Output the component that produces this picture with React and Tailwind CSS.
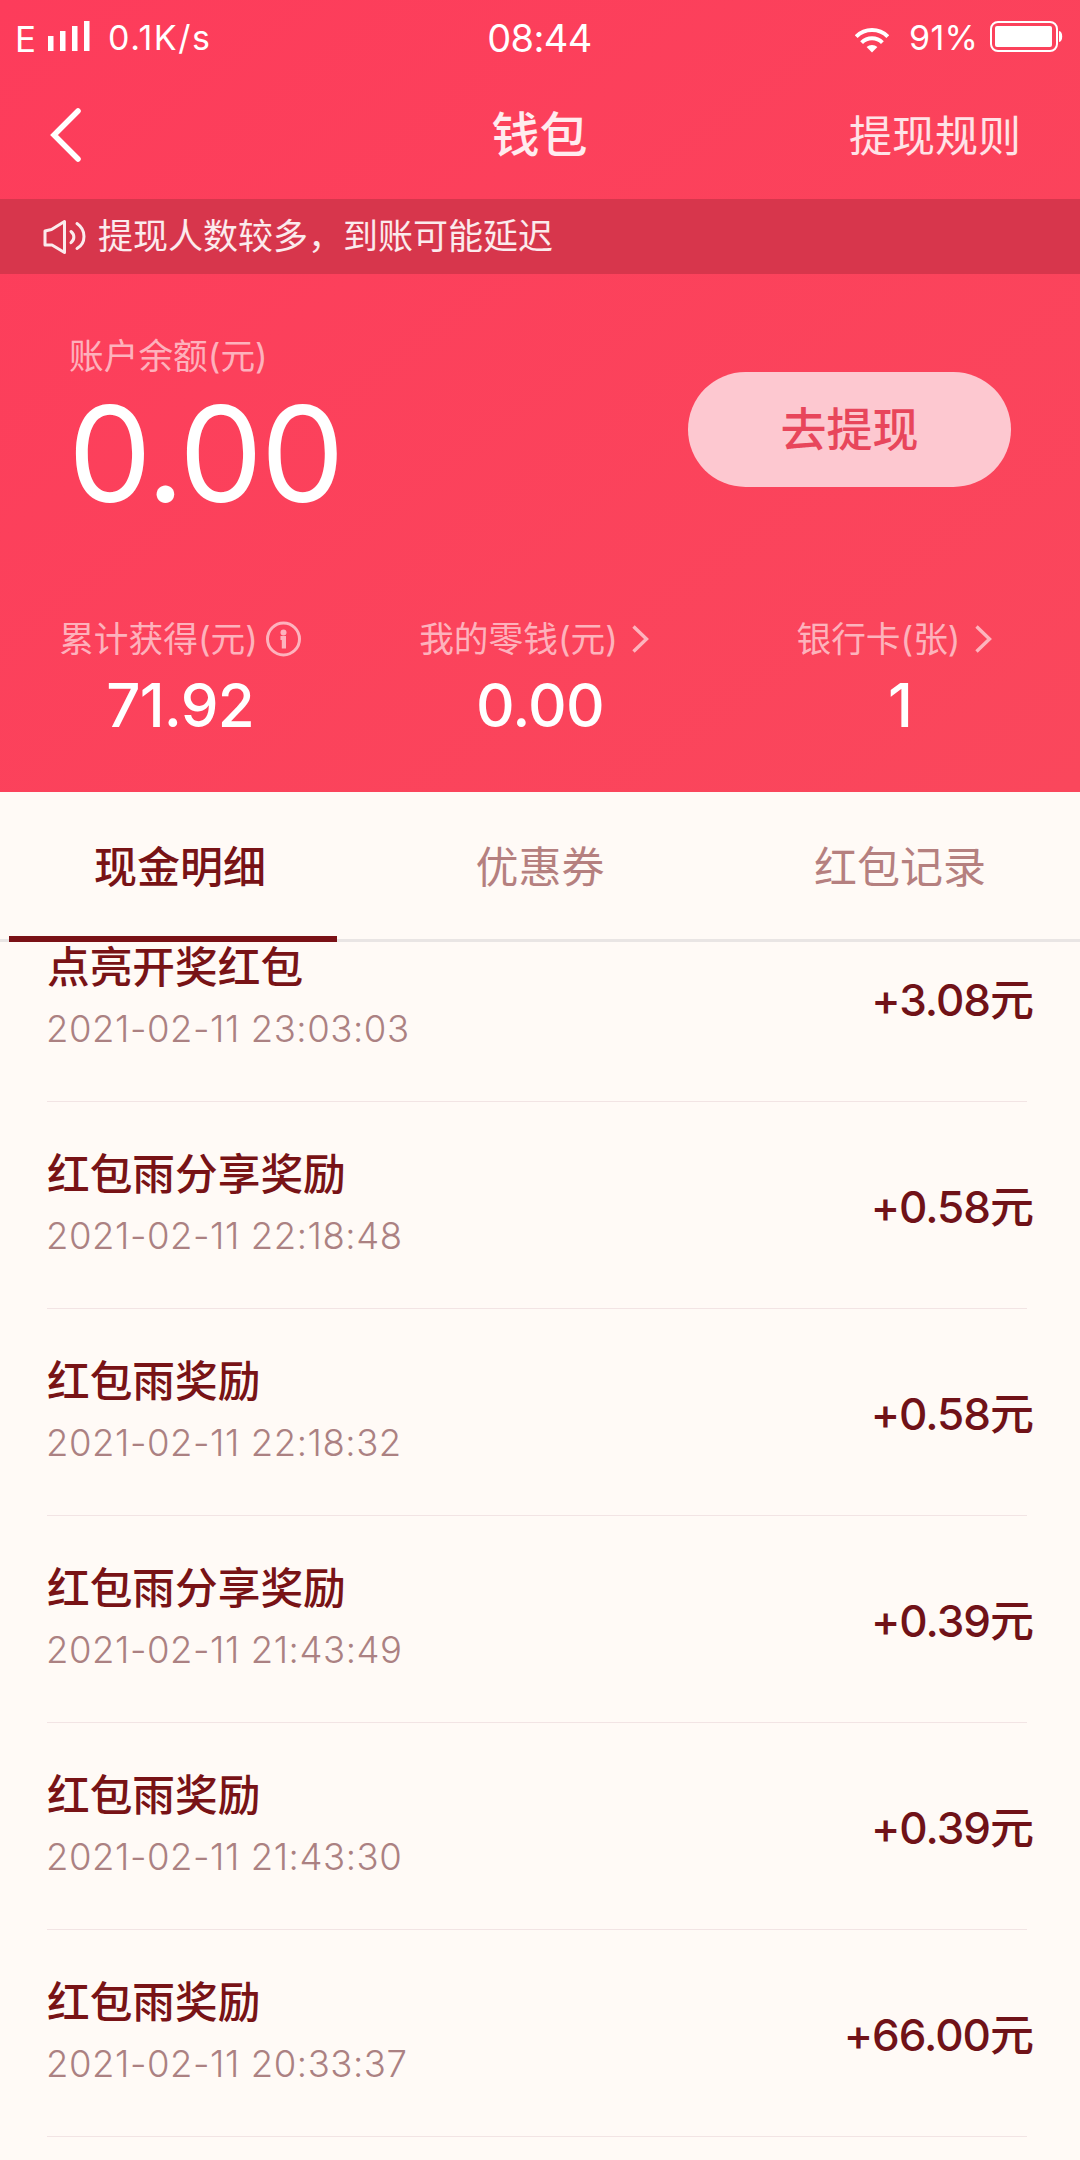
import { useState } from "react";

const TABS = ["现金明细", "优惠券", "红包记录"];

const RECORDS = [
  { title: "点亮开奖红包", time: "2021-02-11 23:03:03", amount: "3.08" },
  { title: "红包雨分享奖励", time: "2021-02-11 22:18:48", amount: "0.58" },
  { title: "红包雨奖励", time: "2021-02-11 22:18:32", amount: "0.58" },
  { title: "红包雨分享奖励", time: "2021-02-11 21:43:49", amount: "0.39" },
  { title: "红包雨奖励", time: "2021-02-11 21:43:30", amount: "0.39" },
  { title: "红包雨奖励", time: "2021-02-11 20:33:37", amount: "66.00" },
];

function SignalIcon() {
  return (
    <svg width="42" height="31" viewBox="0 0 42 31" fill="currentColor">
      <rect x="0" y="15" width="5.500" height="15" />
      <rect x="12" y="10" width="5.500" height="20" />
      <rect x="24" y="5" width="5.500" height="25" />
      <rect x="36" y="0" width="5.500" height="30" />
    </svg>
  );
}

function WifiIcon() {
  return (
    <svg width="34" height="25" viewBox="0 0 34 25" fill="none" stroke="currentColor" strokeWidth="4">
      <path d="M1.2 8.6a22.3 22.3 0 0 1 31.6 0" />
      <path d="M6.6 14.6a14.7 14.7 0 0 1 20.8 0" />
      <path d="M17 24.6l-5.4-5.5a7.7 7.7 0 0 1 10.800 0z" fill="currentColor" stroke="none" />
    </svg>
  );
}

function BatteryIcon() {
  return (
    <svg width="73" height="31" viewBox="0 0 73 31" fill="none">
      <rect x="1" y="1" width="66" height="29" rx="7" stroke="currentColor" strokeWidth="2" />
      <rect x="5" y="5" width="57" height="21" rx="2" fill="currentColor" />
      <path d="M69 10c2.200.6 3.200 2 3.200 5.500s-1 4.900-3.200 5.500z" fill="currentColor" />
    </svg>
  );
}

function SpeakerIcon() {
  return (
    <svg width="44" height="36" viewBox="0 0 44 36" fill="none" stroke="currentColor" strokeWidth="3" strokeLinejoin="round" strokeLinecap="round">
      <path d="M3 12l6.500-1.500L22.500 2.500v31L10 26H3z" />
      <path d="M29 12.500c3.800 3.200 3.800 8 0 11.200" />
      <path d="M35 4.500c9.300 6.500 9.300 19.500 0 25" />
    </svg>
  );
}

function InfoIcon() {
  return (
    <svg width="35" height="36" viewBox="0 0 35 36" fill="none" stroke="currentColor">
      <circle cx="17.500" cy="18" r="16" strokeWidth="3" />
      <circle cx="17.500" cy="11.500" r="3" fill="currentColor" stroke="none" />
      <path d="M14.500 17h3.400v10.500" strokeWidth="4.200" />
    </svg>
  );
}

function Chevron() {
  return (
    <svg width="17" height="28" viewBox="0 0 17 28" fill="none" stroke="currentColor" strokeWidth="3.400">
      <path d="M1.500 1.500l13 12.500-13 12.500" />
    </svg>
  );
}

function Stat({ label, value, icon }) {
  return (
    <div className="flex flex-col items-center">
      <div className="flex h-[44px] items-center text-[34.700px] leading-none text-white/60">
        <span>{label}</span>
        {icon}
      </div>
      <div className="mt-[13px] h-[62px] text-[60px] font-medium leading-[62px] tracking-[-0.800px]">{value}</div>
    </div>
  );
}

export default function WalletPage() {
  const [activeTab, setActiveTab] = useState(0);

  return (
    <div
      lang="zh-CN"
      className="flex h-[2160px] w-[1080px] flex-col overflow-hidden bg-[#fffaf6] font-['Inter','Noto_Sans_CJK_SC',sans-serif]"
    >
      <div className="h-[792px] shrink-0 bg-linear-to-br from-[#fd3c5b] to-[#fa475c] text-white">
        {/* Status bar */}
        <div className="grid h-[76px] grid-cols-3 items-center pl-[15px] pr-[17px] text-[34px] leading-none">
          <div className="flex items-center">
            <span className="mt-[3px] text-[35px]">E</span>
            <span className="ml-[12px] -mt-[3px]"><SignalIcon /></span>
            <span className="ml-[18px] tracking-[1.500px]">0.1K/s</span>
          </div>
          <div className="pl-[1px] text-center text-[38px] tracking-[-0.600px]">08:44</div>
          <div className="flex items-center justify-end">
            <span className="mt-[4px]"><WifiIcon /></span>
            <span className="ml-[20px] mr-[12px] tracking-[0.200px]">91%</span>
            <span className="-mt-[3px]"><BatteryIcon /></span>
          </div>
        </div>

        {/* Nav bar */}
        <div className="grid h-[123px] grid-cols-3 items-center pb-[5px] pl-[50px] pr-[59px]">
          <svg width="32" height="54" viewBox="0 0 32 54" fill="none" stroke="currentColor" strokeWidth="5.500" strokeLinecap="round">
            <path d="M28 3L4 27l24 24" />
          </svg>
          <h1 className="pl-[8px] text-center text-[48px] font-medium leading-none text-white/90">钱包</h1>
          <span className="pt-[2px] text-right text-[43px] leading-none text-white/85">提现规则</span>
        </div>

        {/* Notice */}
        <div className="flex h-[75px] items-center bg-[#d7364c] pl-[42px] text-white/90">
          <SpeakerIcon />
          <span className="ml-[12px] text-[35px] leading-none">提现人数较多，到账可能延迟</span>
        </div>

        {/* Balance */}
        <div className="flex h-[343px] items-start justify-between pl-[69px] pr-[69px]">
          <div className="pt-[60px]">
            <div className="text-[34.700px] leading-[44px] text-white/60">账户余额(元)</div>
            <div className="-ml-px mt-[8px] text-[133px] leading-[136px] tracking-[-2.200px]">0.00</div>
          </div>
          <button className="mt-[98px] h-[115px] w-[323px] rounded-full bg-[#fdc8d0] text-[46px] font-medium text-[#e8465b]">
            去提现
          </button>
        </div>

        {/* Totals */}
        <div className="grid grid-cols-3">
          <Stat label="累计获得(元)" value="71.92" icon={<span className="ml-[8px]"><InfoIcon /></span>} />
          <Stat label="我的零钱(元)" value="0.00" icon={<span className="ml-[14px] mr-[12px]"><Chevron /></span>} />
          <Stat label="银行卡(张)" value="1" icon={<span className="ml-[14px] mr-[12px]"><Chevron /></span>} />
        </div>
      </div>

      {/* Tabs */}
      <div className="grid h-[150px] shrink-0 grid-cols-3 border-b-[3px] border-[#e9e5e4]">
        {TABS.map((tab, i) => (
          <button
            key={tab}
            onClick={() => setActiveTab(i)}
            className="relative pt-[4px] text-[43px] leading-[143px]"
          >
            <span className={i === activeTab ? "font-medium text-[#781316]" : "text-[#b5807f]"}>{tab}</span>
            {i === activeTab && <span className="absolute -bottom-[3px] left-[9px] h-[6px] w-[328px] bg-[#7a1116]" />}
          </button>
        ))}
      </div>

      {/* Records, scrolled a little under the tabs */}
      <div className="flex-1 overflow-hidden">
        <div className="-mt-[47px]">
          {RECORDS.map((r) => (
            <div key={r.time} className="ml-[47px] mr-[53px] flex h-[207px] items-center justify-between border-b border-[#f2e4e4]">
              <div className="pt-[1px]">
                <div className="text-[42.700px] font-medium leading-[61px] text-[#781316]">{r.title}</div>
                <div className="-ml-px text-[36.500px] font-light leading-[62px] tracking-[0.550px] text-[#ab8182]">{r.time}</div>
              </div>
              <div className="-mr-[6px] pt-[3px] text-[44px] font-medium leading-none tracking-[-1px] text-[#701218]">+{r.amount}元</div>
            </div>
          ))}
        </div>
      </div>
    </div>
  );
}
